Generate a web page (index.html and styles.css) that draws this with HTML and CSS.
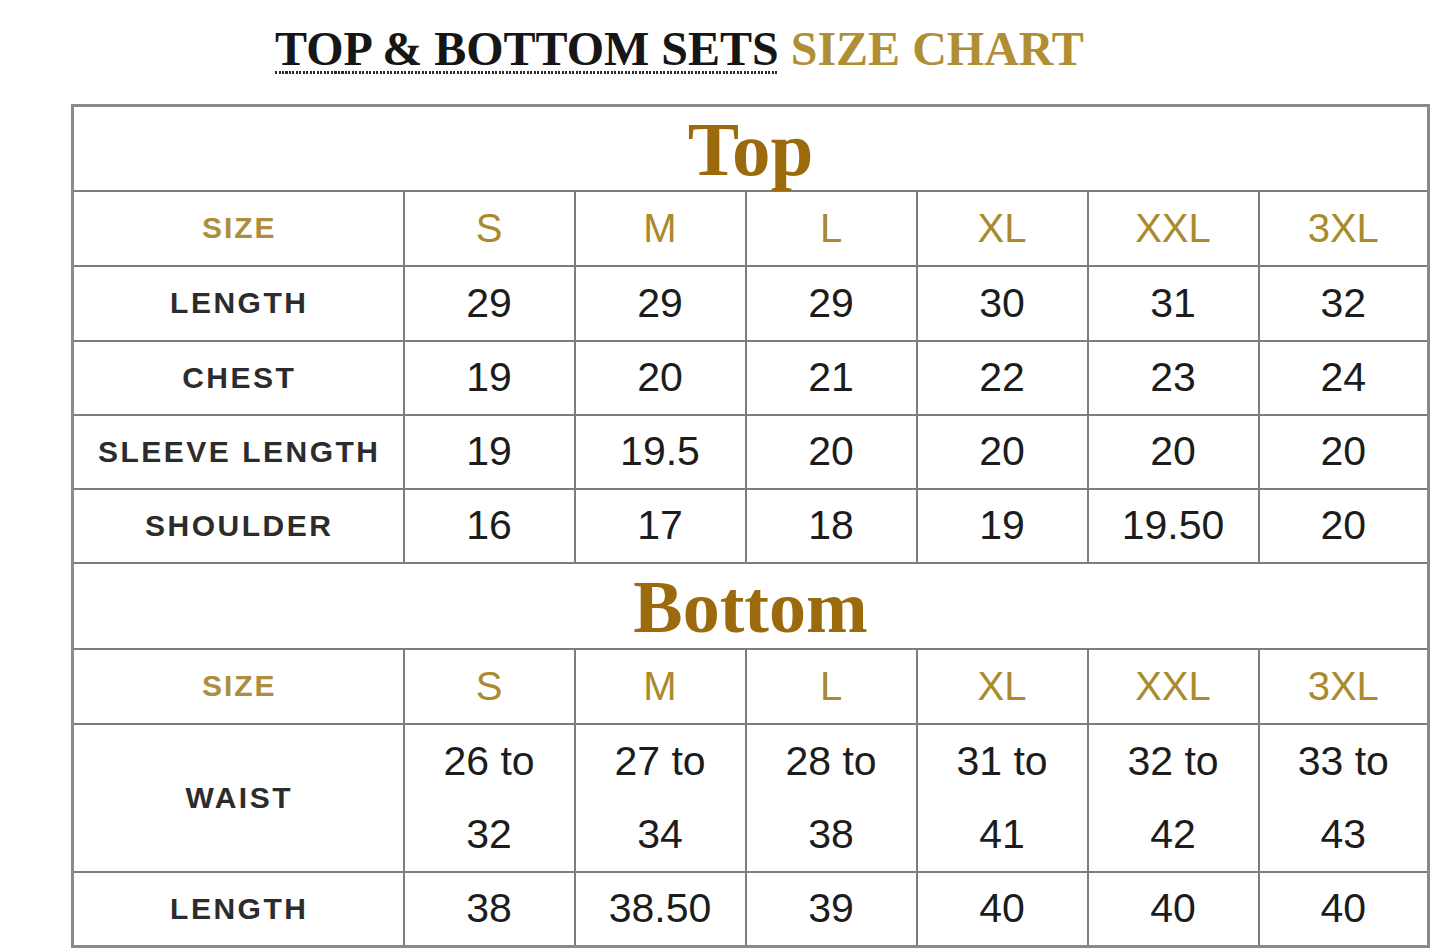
FILE: index.html
```html
<!DOCTYPE html>
<html lang="en">
<head>
<meta charset="utf-8">
<title>Top &amp; Bottom Sets Size Chart</title>
<link rel="stylesheet" href="styles.css">
</head>
<body>
<div class="page">
  <h1 class="heading"><span class="heading-main">TOP &amp; BOTTOM SETS</span> <span class="heading-accent">SIZE CHART</span></h1>
  <table class="chart">
    <colgroup>
      <col class="col-label">
      <col class="col-size">
      <col class="col-size">
      <col class="col-size">
      <col class="col-size">
      <col class="col-size">
      <col class="col-last">
    </colgroup>
    <tbody>
      <tr class="row-section"><th colspan="7" class="section">Top</th></tr>
      <tr class="row-std">
        <th class="label label-gold">SIZE</th>
        <th class="size">S</th><th class="size">M</th><th class="size">L</th><th class="size">XL</th><th class="size">XXL</th><th class="size">3XL</th>
      </tr>
      <tr class="row-std">
        <th class="label">LENGTH</th>
        <td>29</td><td>29</td><td>29</td><td>30</td><td>31</td><td>32</td>
      </tr>
      <tr class="row-mid">
        <th class="label">CHEST</th>
        <td>19</td><td>20</td><td>21</td><td>22</td><td>23</td><td>24</td>
      </tr>
      <tr class="row-mid">
        <th class="label">SLEEVE LENGTH</th>
        <td>19</td><td>19.5</td><td>20</td><td>20</td><td>20</td><td>20</td>
      </tr>
      <tr class="row-mid">
        <th class="label">SHOULDER</th>
        <td>16</td><td>17</td><td>18</td><td>19</td><td>19.50</td><td>20</td>
      </tr>
      <tr class="row-section row-section-b"><th colspan="7" class="section section-b">Bottom</th></tr>
      <tr class="row-std">
        <th class="label label-gold">SIZE</th>
        <th class="size">S</th><th class="size">M</th><th class="size">L</th><th class="size">XL</th><th class="size">XXL</th><th class="size">3XL</th>
      </tr>
      <tr class="row-tall">
        <th class="label">WAIST</th>
        <td class="range">26 to<br>32</td><td class="range">27 to<br>34</td><td class="range">28 to<br>38</td><td class="range">31 to<br>41</td><td class="range">32 to<br>42</td><td class="range">33 to<br>43</td>
      </tr>
      <tr class="row-std">
        <th class="label">LENGTH</th>
        <td>38</td><td>38.50</td><td>39</td><td>40</td><td>40</td><td>40</td>
      </tr>
    </tbody>
  </table>
</div>
</body>
</html>
```

FILE: styles.css
```css
html, body {
  margin: 0;
  padding: 0;
  background: #ffffff;
}

.page {
  width: 1445px;
  height: 949px;
  overflow: hidden;
  padding-top: 25px;
  box-sizing: border-box;
}

.heading {
  margin: 0 0 31px 0;
  padding-left: 275px;
  font-family: "Liberation Serif", "Times New Roman", serif;
  font-weight: 700;
  font-size: 48px;
  line-height: 48px;
  white-space: nowrap;
  letter-spacing: 0;
}

.heading-main {
  color: #161616;
  background-image: repeating-linear-gradient(90deg, #2a2a2a 0 2px, transparent 2px 3.5px);
  background-repeat: no-repeat;
  background-size: 100% 3px;
  background-position: 0 49px;
}

.heading-accent {
  color: #b08e34;
}

.chart {
  margin-left: 71px;
  border-collapse: collapse;
  table-layout: fixed;
  width: 1356px;
  border: 3px solid #8a8a8a;
}

.col-label { width: 331px; }
.col-size { width: 171px; }
.col-last { width: 170px; }

.chart th,
.chart td {
  border: 2px solid #7d7d7d;
  padding: 0;
  text-align: center;
  vertical-align: middle;
  font-family: "Liberation Sans", Arial, sans-serif;
}

.row-section { height: 85px; }
.row-section-b { height: 86px; }
.row-std { height: 75px; }
.row-mid { height: 74px; }
.row-tall { height: 148px; }

.section {
  font-family: "Liberation Serif", "Times New Roman", serif !important;
  font-weight: 700;
  font-size: 77px;
  line-height: 72px;
  color: #9b6a0c;
  padding-top: 2px !important;
}

.section-b {
  font-size: 74px;
  padding-top: 2px !important;
}

.label {
  font-weight: 700;
  font-size: 30px;
  letter-spacing: 2.5px;
  color: #2c2c2c;
  padding-left: 2px !important;
}

.label-gold {
  color: #ab8e3e;
  letter-spacing: 2px;
}

.size {
  font-weight: 400;
  font-size: 40px;
  color: #a98a2c;
}

.chart td {
  font-size: 41px;
  color: #1c1c1c;
  font-weight: 400;
}

.chart td.range {
  line-height: 73px;
}
```
